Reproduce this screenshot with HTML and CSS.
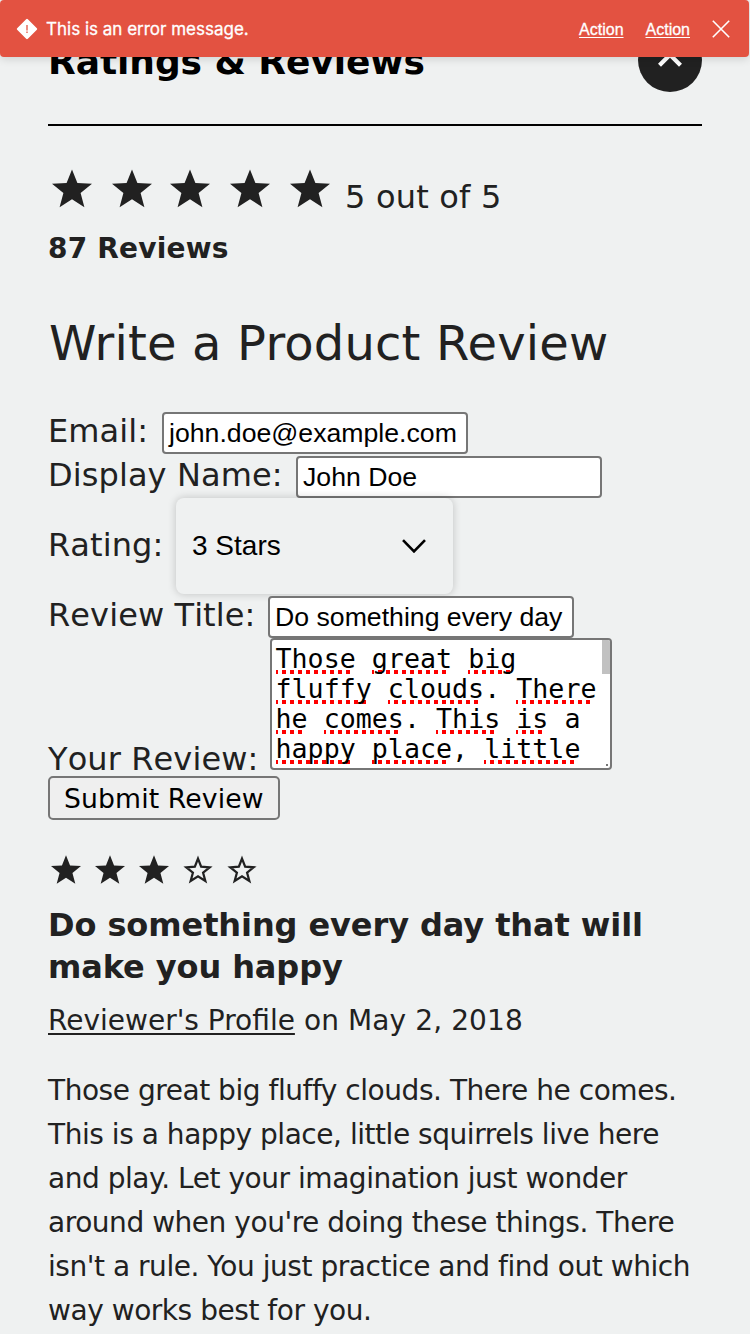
FILE: index.html
```html
<!DOCTYPE html>
<html lang="en">
<head>
<meta charset="utf-8">
<title>Ratings &amp; Reviews</title>
<link rel="stylesheet" href="styles.css">
</head>
<body>
<svg class="defs" aria-hidden="true">
  <symbol id="star" viewBox="0 0 24 24"><path d="M12 2.2 14.7 9 22 9.4 16.3 14 18.2 21.1 12 17.1 5.8 21.1 7.7 14 2 9.4 9.3 9Z"/></symbol>
  <symbol id="star-empty" viewBox="0 0 24 24"><path fill="none" stroke="currentColor" stroke-width="1.5" d="M12 4.4 14.1 9.8 19.8 10.2 15.4 13.8 16.9 19.3 12 16.2 7.1 19.3 8.6 13.8 4.2 10.2 9.9 9.8Z"/></symbol>
</svg>
<div class="alert" role="alert">
  <svg class="alert-icon" viewBox="0 0 22 22"><path fill="#fff" stroke="#fff" stroke-width="2.4" stroke-linejoin="round" d="M11 2 20 11 11 20 2 11Z"/><path stroke="#eb8377" stroke-width="1.8" d="M11 7v5.4M11 13.4v1.6"/></svg>
  <span class="alert-text">This is an error message.</span>
  <a class="alert-action">Action</a>
  <a class="alert-action">Action</a>
  <svg class="alert-close" viewBox="0 0 18 18"><path fill="none" stroke="#fff" stroke-width="1.6" d="M.8.8 17.2 17.2M17.2.8.8 17.2"/></svg>
</div>
<main class="page">
  <header class="section-head">
    <h1 class="section-title">Ratings &amp; Reviews</h1>
    <span class="toggle"><svg viewBox="0 0 64 64"><path fill="none" stroke="#fff" stroke-width="4.2" d="M21.5 37.2 32 26.7 42.5 37.2"/></svg></span>
  </header>
  <div class="summary">
    <svg class="star"><use href="#star"/></svg><svg class="star"><use href="#star"/></svg><svg class="star star-mid"><use href="#star"/></svg><svg class="star"><use href="#star"/></svg><svg class="star"><use href="#star"/></svg>
    <span class="score">5 out of 5</span>
  </div>
  <p class="count">87 Reviews</p>
  <h2 class="form-title">Write a Product Review</h2>
  <form class="form">
    <div class="row"><label class="label label-email">Email:</label><span class="field">john.doe@example.com</span></div>
    <div class="row"><label class="label label-name">Display Name:</label><span class="field">John Doe</span></div>
    <div class="row row-select"><label class="label label-rating">Rating:</label><span class="select"><span>3 Stars</span><svg class="chevron" viewBox="0 0 24 14"><path fill="none" stroke="#000" stroke-width="2.6" d="M1 1.2 12 12.4 23 1.2"/></svg></span></div>
    <div class="row row-title"><label class="label label-title">Review Title:</label><span class="field">Do something every day</span></div>
    <div class="row row-area"><label class="label label-review">Your Review:</label><div class="area"><div class="area-text"><u>Those</u> <u>great</u> <u>big</u><br><u>fluffy</u> <u>clouds</u>. <u>There</u><br><u>he</u> <u>comes</u>. <u>This</u> <u>is</u> a<br><u>happy</u> <u>place</u>, <u>little</u><br>squirrels live here</div><span class="thumb"></span><span class="grip"></span></div></div>
    <button class="submit" type="button">Submit Review</button>
  </form>
  <article class="review">
    <div class="review-stars"><svg><use href="#star"/></svg><svg><use href="#star"/></svg><svg><use href="#star"/></svg><svg><use href="#star-empty"/></svg><svg><use href="#star-empty"/></svg></div>
    <h3 class="review-title">Do something every day that will<br>make you happy</h3>
    <p class="byline"><a class="profile">Reviewer's Profile</a> on May 2, 2018</p>
    <p class="review-text">Those great big fluffy clouds. There he comes.<br>This is a happy place, little squirrels live here<br>and play. Let your imagination just wonder<br>around when you're doing these things. There<br>isn't a rule. You just practice and find out which<br>way works best for you.</p>
  </article>
</main>
</body>
</html>
```
FILE: styles.css
```css
* { box-sizing: border-box; }
body { margin: 0; height: 1334px; overflow: hidden; background: #eff1f1; color: #212121; font-family: Verdana, "DejaVu Sans", sans-serif; }
h1, h2, h3, p { margin: 0; white-space: nowrap; }
.defs { position: absolute; width: 0; height: 0; }

.alert { position: absolute; top: 0; left: 0; z-index: 2; width: 749px; height: 57px; display: flex; align-items: center; padding: 0 19px 0 16px; border-radius: 4px; background: #e35241; color: #fff; box-shadow: 0 2px 8px rgba(0,0,0,.14); font-family: "Liberation Sans", Arial, sans-serif; }
.alert-icon { width: 22px; height: 22px; margin-right: 8px; }
.alert-text { flex: 1; font-family: Inter, "Liberation Sans", sans-serif; font-size: 17px; -webkit-text-stroke: .3px #fff; }
.alert-action { margin-right: 22px; padding-top: 3px; font-size: 16px; -webkit-text-stroke: .3px #fff; text-decoration: underline; text-underline-offset: 2px; }
.alert-close { width: 18px; height: 18px; }

.page { padding: 0 48px; fill: #212121; }
.section-head { height: 126px; border-bottom: 2px solid #000; display: flex; justify-content: space-between; padding-top: 28px; }
.section-title { font-size: 36px; line-height: 68px; letter-spacing: -.06px; color: #000; }
.toggle { width: 64px; height: 64px; border-radius: 50%; background: #212121; }
.toggle svg { display: block; }

.summary { display: flex; height: 101px; padding-top: 39px; }
.star { width: 48px; height: 48px; margin-right: 12px; }
.star-mid { margin-left: -2px; }
.score { margin-left: -1px; padding-top: 2px; font-size: 32px; line-height: 60px; letter-spacing: .2px; }
.count { padding-top: 1px; height: 42px; font-size: 28px; line-height: 42px; font-weight: bold; letter-spacing: .2px; }
.form-title { margin-top: 44px; margin-left: 1px; font-size: 48px; line-height: 60px; font-weight: normal; letter-spacing: .18px; }

.form { margin-top: 39px; }
.row { display: flex; height: 44px; }
.label { font-size: 32px; line-height: 38px; white-space: nowrap; font-kerning: none; letter-spacing: .1px; }
.label-email { width: 114px; }
.label-name { width: 248px; }
.label-rating { width: 127px; padding-top: 26px; }
.label-title { width: 220px; }
.label-review { width: 222px; padding-top: 102px; }
.field { width: 306px; height: 42px; border: 2px solid #767676; border-radius: 4px; background: #fff; color: #000; padding: 0 5px; font: 26.67px/38px "Liberation Sans", Arial, sans-serif; white-space: nowrap; }
.row-select { height: 96px; position: relative; }
.select { width: 277px; height: 96px; margin-top: -2px; margin-left: 1px; display: flex; align-items: center; justify-content: space-between; padding: 0 27px 0 16px; border-radius: 8px; background: #eff1f1; color: #000; box-shadow: 0 0 8px rgba(0,0,0,.2); font: 28px "Liberation Sans", Arial, sans-serif; }
.chevron { width: 24px; height: 14px; fill: none; }
.row-title { height: 42px; position: relative; }
.row-area { height: 138px; }
.area { position: relative; width: 342px; height: 132px; overflow: hidden; border: 2px solid #767676; border-radius: 4px; background: #fff; color: #000; padding: 4px 4px 4px 3.5px; }
.area-text { font: 26.67px/30px "DejaVu Sans Mono", monospace; white-space: nowrap; }
.area-text u { text-decoration: none; background: repeating-linear-gradient(90deg, red 0 2px, transparent 2px 6px, red 6px 8px) left bottom / calc(100% - 4px) 4px no-repeat; }
.thumb { position: absolute; top: 0; right: 0; width: 8px; height: 34px; background: #c1c1c1; }
.grip { position: absolute; right: 2px; bottom: 2px; width: 2px; height: 2px; background: #767676; }
.submit { display: block; width: 232px; height: 44px; border: 2px solid #767676; border-radius: 5px; background: #efefef; color: #000; padding: 1px 0 0 14px; text-align: left; font: 26.67px/38px Verdana, "DejaVu Sans", sans-serif; letter-spacing: .12px; white-space: nowrap; }

.review-stars { display: flex; gap: 8px; margin-top: 32px; height: 36px; }
.review-stars svg { width: 36px; height: 36px; color: #212121; }
.review-title { margin-top: 16px; font-size: 32px; line-height: 42px; letter-spacing: -.09px; }
.byline { margin-top: 12px; font-size: 28px; line-height: 42px; letter-spacing: .11px; font-kerning: none; }
.profile { letter-spacing: 0; font-kerning: auto; text-decoration: underline; text-decoration-thickness: 2px; text-underline-offset: 3px; }
.review-text { margin-top: 27px; font-size: 28px; line-height: 44px; letter-spacing: -.46px; }
```
